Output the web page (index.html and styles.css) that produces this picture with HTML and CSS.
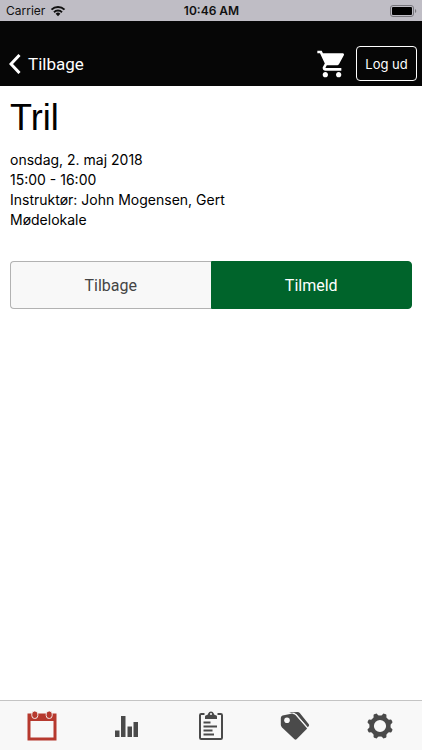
FILE: index.html
```html
<!DOCTYPE html>
<html lang="da">
<head>
<meta charset="utf-8">
<meta name="viewport" content="width=device-width, initial-scale=1">
<title>Tril</title>
<link rel="stylesheet" href="styles.css">
</head>
<body>
<div class="status">
  <div class="carrier">
    <span>Carrier</span>
    <svg width="16" height="12" viewBox="0 0 16 12" aria-hidden="true">
      <g fill="none" stroke="#111" stroke-width="2">
        <path d="M1.500 4.600A9.200 9.200 0 0 1 14.500 4.600"/>
        <path d="M4 7.200A5.700 5.700 0 0 1 12 7.200"/>
      </g>
      <path d="M8 11.200L5.600 8.800A3.400 3.400 0 0 1 10.400 8.800Z" fill="#111"/>
    </svg>
  </div>
  <time class="clock">10:46 AM</time>
  <svg class="battery" width="27" height="12" viewBox="0 0 27 12" aria-hidden="true">
    <rect x=".5" y=".5" width="23" height="11" rx="2.500" fill="none" stroke="#77767c"/>
    <rect x="2" y="2" width="20" height="8" rx="1" fill="#000"/>
    <path d="M25 4a2.200 2.200 0 0 1 0 4z" fill="#77767c"/>
  </svg>
</div>
<header class="navbar">
  <a class="back" href="#">
    <svg width="12" height="20" viewBox="0 0 12 20" aria-hidden="true"><path d="M10.500 1L2 10l8.500 9" fill="none" stroke="#fff" stroke-width="3"/></svg>
    <span>Tilbage</span>
  </a>
  <div class="actions">
    <a class="cart" href="#" aria-label="Kurv">
      <svg width="32" height="32" viewBox="0 0 24 24" aria-hidden="true"><path fill="#fff" d="M7 18c-1.100 0-1.990.9-1.990 2S5.900 22 7 22s2-.9 2-2-.9-2-2-2zM1 2v2h2l3.600 7.590-1.350 2.450c-.16.280-.25.610-.25.960 0 1.100.9 2 2 2h12v-2H7.420c-.14 0-.25-.11-.25-.25l.03-.12.900-1.630h7.450c.75 0 1.410-.41 1.750-1.030l3.580-6.490c.08-.14.120-.31.120-.48 0-.55-.45-1-1-1H5.210l-.94-2H1zm16 16c-1.100 0-1.990.9-1.990 2s.89 2 1.990 2 2-.9 2-2-.9-2-2-2z"/></svg>
    </a>
    <button class="logout" type="button">Log ud</button>
  </div>
</header>
<main class="content">
  <h1>Tril</h1>
  <p class="details">onsdag, 2. maj 2018<br>15:00 - 16:00<br>Instruktør: John Mogensen, Gert<br>Mødelokale</p>
  <div class="choices">
    <button class="choice" type="button">Tilbage</button>
    <button class="choice primary" type="button">Tilmeld</button>
  </div>
</main>
<nav class="tabs">
  <a href="#" aria-label="Kalender" aria-current="page">
    <svg width="30" height="30" viewBox="0 0 30 30" aria-hidden="true">
      <path d="M.5 2.500H29.500V29.500H.5ZM3.500 10V26.500H26.500V10Z" fill="#b6392e" fill-rule="evenodd"/>
      <g fill="#b6392e" stroke="#f8f8f8" stroke-width=".9"><rect x="4.800" y="0" width="6" height="7.500" rx="2.900"/><rect x="19.200" y="0" width="6" height="7.500" rx="2.900"/></g>
    </svg>
  </a>
  <a href="#" aria-label="Statistik">
    <svg width="30" height="30" viewBox="0 0 30 30" aria-hidden="true"><path d="M3 19.500h4.500V26H3zM9 5h4.500v21H9zM15.500 15.500H20V26h-4.500zM21.500 11H26v15h-4.500z" fill="#4a4a4a"/></svg>
  </a>
  <a href="#" aria-label="Bookinger">
    <svg width="30" height="30" viewBox="0 0 30 30" aria-hidden="true">
      <path d="M8.500 3H5.200Q4 3 4 4.200V26.800Q4 28 5.200 28H24.800Q26 28 26 26.800V4.200Q26 3 24.800 3H21.500" fill="none" stroke="#4a4a4a" stroke-width="2"/>
      <path d="M9 8V5.500Q9 4 11 4Q12 3.800 12.200 2.500A3 3 0 0 1 17.800 2.500Q18 3.800 19 4Q21 4 21 5.500V8Z" fill="#4a4a4a"/>
      <circle cx="15" cy="3" r="1" fill="#f8f8f8"/>
      <path d="M7.500 11.500h7M7.500 15.500h13.500M7.500 19.500h9M7.500 23.500h10.500" stroke="#4a4a4a" stroke-width="2"/>
    </svg>
  </a>
  <a href="#" aria-label="Priser">
    <svg width="30" height="30" viewBox="0 0 30 30" aria-hidden="true">
      <path d="M9 1.500L17.500 1Q18.800 1 19.800 2L28.800 13.300Q29.500 14.300 28.700 15.200L27.700 16.200L16.500 3.300Z" fill="#4a4a4a"/>
      <path d="M2.500 4.500L12.500 2.500Q14.500 2.300 15.800 3.700L26.700 16Q27.500 17 26.700 17.900L16.500 28.300Q15.500 29.200 14.500 28.300L2 16.500Q.8 15.200.8 13.500V7Q.8 5 2.500 4.500Z" fill="#4a4a4a"/>
      <path d="M12.500 2.400Q14.500 2.300 15.800 3.700L27.200 16.700" fill="none" stroke="#f8f8f8" stroke-width="1.200"/>
      <circle cx="7" cy="9.200" r="2.800" fill="#f8f8f8"/>
    </svg>
  </a>
  <a href="#" aria-label="Indstillinger">
    <svg width="30" height="30" viewBox="-15 -15 30 30" aria-hidden="true">
      <circle r="8.300" fill="none" stroke="#4a4a4a" stroke-width="4.400"/>
      <g fill="#4a4a4a">
        <path id="tooth" d="M-4-9.200Q-2.200-10.200-2-12Q-1.900-13-.9-13H.9Q1.900-13 2-12Q2.200-10.200 4-9.200Z" transform="rotate(22.500)"/>
        <use href="#tooth" transform="rotate(45)"/><use href="#tooth" transform="rotate(90)"/><use href="#tooth" transform="rotate(135)"/><use href="#tooth" transform="rotate(180)"/><use href="#tooth" transform="rotate(225)"/><use href="#tooth" transform="rotate(270)"/><use href="#tooth" transform="rotate(315)"/>
      </g>
    </svg>
  </a>
</nav>
</body>
</html>
```
FILE: styles.css
```css
* { box-sizing: border-box; }

body {
  margin: 0;
  min-height: 100vh;
  display: flex;
  flex-direction: column;
  background: #fff;
  color: #000;
  font-family: Inter, "Liberation Sans", sans-serif;
}

svg { display: block; }
a { color: inherit; text-decoration: none; }
button { font: inherit; cursor: pointer; }

.status {
  display: grid;
  grid-template-columns: 1fr auto 1fr;
  align-items: center;
  height: 21px;
  padding: 0 5px 0 6px;
  background: #bfbdc5;
  color: #111;
  font-size: 12px;
}

.carrier { display: flex; align-items: center; gap: 5px; }
.clock { font-weight: 600; }
.battery { justify-self: end; }

.navbar {
  display: flex;
  align-items: center;
  justify-content: space-between;
  height: 65px;
  padding: 20px 5px 0 9px;
  background: #060606;
  color: #fff;
}

.back {
  display: flex;
  align-items: center;
  gap: 7px;
  font-family: Roboto, Inter, sans-serif;
  font-size: 17px;
}

.actions { display: flex; align-items: center; gap: 8px; }

.logout {
  width: 61px;
  height: 35px;
  padding: 0;
  border: 1px solid #fff;
  border-radius: 4px;
  background: transparent;
  color: #fff;
  font-size: 13px;
}

.content { flex: 1; padding: 10px 10px; }

h1 {
  margin: 0 0 10px;
  font-family: "Liberation Sans", Arial, sans-serif;
  font-size: 36px;
  line-height: 44px;
  font-weight: 400;
}

.details { margin: 0 0 31px; font-size: 14px; line-height: 20px; }

.choices { display: flex; }

.choice {
  flex: 1;
  height: 48px;
  padding: 0;
  border: 1px solid #b2b2b2;
  border-right: 0;
  border-radius: 4px 0 0 4px;
  background: #f8f8f8;
  color: #444;
  font-family: Roboto, Inter, sans-serif;
  font-size: 16px;
}

.choice.primary {
  border: 1px solid #00642b;
  border-radius: 0 4px 4px 0;
  background: #00642b;
  color: #fff;
}

.tabs {
  display: flex;
  height: 50px;
  border-top: 1px solid #c4c4c4;
  background: #f8f8f8;
}

.tabs a { flex: 1; display: flex; align-items: center; justify-content: center; }
```
